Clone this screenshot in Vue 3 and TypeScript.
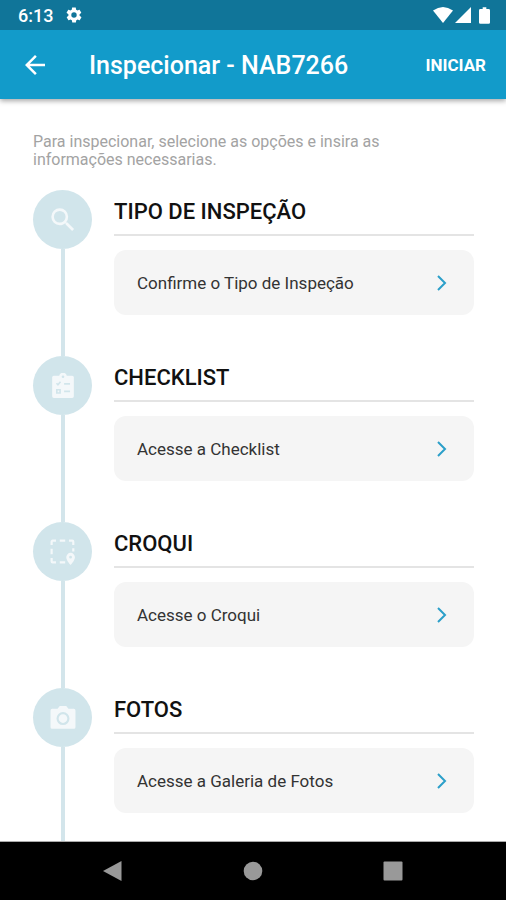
<script setup lang="ts">
type IconName = 'search' | 'checklist' | 'sketch' | 'camera'

interface Step {
  title: string
  action: string
  icon: IconName
}

const steps: Step[] = [
  { title: 'TIPO DE INSPEÇÃO', action: 'Confirme o Tipo de Inspeção', icon: 'search' },
  { title: 'CHECKLIST', action: 'Acesse a Checklist', icon: 'checklist' },
  { title: 'CROQUI', action: 'Acesse o Croqui', icon: 'sketch' },
  { title: 'FOTOS', action: 'Acesse a Galeria de Fotos', icon: 'camera' },
]
</script>

<template>
  <div class="screen">
    <div class="status">
      <span class="time">6:13</span>
      <svg class="gear" viewBox="0 0 24 24" aria-hidden="true">
        <path d="M19.4 13c0-.3.1-.6.1-1s0-.7-.1-1l2.1-1.600c.2-.2.2-.4.1-.6l-2-3.500c-.1-.2-.4-.3-.6-.2l-2.500 1c-.5-.4-1.100-.7-1.700-1l-.4-2.600c0-.2-.2-.4-.5-.4h-4c-.2 0-.5.2-.5.4l-.4 2.600c-.6.3-1.200.6-1.700 1l-2.500-1c-.2-.1-.5 0-.6.2l-2 3.500c-.1.2-.1.5.1.6L4.600 11c-.1.300-.1.700-.1 1s0 .7.1 1l-2.100 1.600c-.2.200-.2.400-.1.600l2 3.500c.1.200.4.300.6.200l2.500-1c.5.400 1.100.7 1.700 1l.4 2.600c0 .2.300.4.500.4h4c.3 0 .5-.2.5-.4l.4-2.600c.6-.3 1.200-.6 1.700-1l2.500 1c.2.100.5 0 .6-.2l2-3.500c.1-.2.1-.4-.1-.6L19.400 13zM12 15.600a3.600 3.600 0 1 1 0-7.200 3.600 3.600 0 0 1 0 7.200z" fill-rule="evenodd" />
      </svg>
      <div class="signals">
        <svg class="wifi" viewBox="0 0 20 16" aria-hidden="true"><path d="M0 3.500Q10-3.500 20 3.500L10 16z" /></svg>
        <svg class="cell" viewBox="0 0 16 16" aria-hidden="true"><path d="M16 0v16H0z" /></svg>
        <svg class="battery" viewBox="0 0 12 18" aria-hidden="true"><path d="M4 0h4v2h2.500Q12 2 12 3.500v13q0 1.500-1.500 1.500h-9Q0 18 0 16.500v-13Q0 2 1.500 2H4z" /></svg>
      </div>
    </div>

    <header class="appbar">
      <button class="back" type="button" aria-label="Voltar">
        <svg viewBox="0 0 24 24" aria-hidden="true"><path d="M20 11H7.830l5.590-5.590L12 4l-8 8 8 8 1.410-1.410L7.830 13H20z" /></svg>
      </button>
      <h1>Inspecionar - NAB7266</h1>
      <button class="start" type="button">INICIAR</button>
    </header>

    <main class="content">
      <p class="intro">Para inspecionar, selecione as opções e insira as informações necessarias.</p>
      <ol class="steps">
        <li v-for="step in steps" :key="step.title" class="step">
          <div class="rail">
            <span class="bubble">
              <svg v-if="step.icon === 'search'" viewBox="2 2 20 20" aria-hidden="true">
                <path d="M15.500 14h-.79l-.28-.27A6.470 6.470 0 0 0 16 9.500 6.500 6.500 0 1 0 9.500 16c1.610 0 3.090-.59 4.230-1.570l.27.28v.79l5 4.990L20.490 19zm-6 0a4.500 4.500 0 1 1 0-9 4.500 4.500 0 0 1 0 9z" />
              </svg>
              <svg v-else-if="step.icon === 'checklist'" viewBox="0 0 24 24" aria-hidden="true">
                <path d="M20.500 2.500h-5a3.600 3.600 0 0 0-7 0h-5A1.500 1.500 0 0 0 2 4v17.500A1.500 1.500 0 0 0 3.500 23h17a1.500 1.500 0 0 0 1.500-1.500V4a1.500 1.500 0 0 0-1.500-1.500z" />
                <g class="cut">
                  <circle cx="12" cy="3.400" r="1.200" class="dot" />
                  <path d="M6 9.500l1.300 1.300 2.400-2.800M13 10h5.500M13 17h5.500M6.300 15.500h3v3h-3z" />
                </g>
              </svg>
              <svg v-else-if="step.icon === 'sketch'" viewBox="0 0 24 24" aria-hidden="true">
                <path class="dash" d="M1.500 5.500v-3a1 1 0 0 1 1-1h3M9 1.500h5M17.500 1.500h3a1 1 0 0 1 1 1v3M21.500 8.500v3M1.500 9v5M1.500 17.500v3a1 1 0 0 0 1 1h3M9 21.500h5" />
                <path d="M19 12.800a4 4 0 0 0-4 4c0 3 4 7.200 4 7.200s4-4.200 4-7.200a4 4 0 0 0-4-4zm0 5.300a1.300 1.300 0 1 1 0-2.600 1.300 1.300 0 0 1 0 2.600z" />
              </svg>
              <svg v-else viewBox="0 0 24 24" aria-hidden="true">
                <path d="M9 1 7 3.500H2A1.500 1.500 0 0 0 .5 5v15.500A1.500 1.500 0 0 0 2 22h20a1.500 1.500 0 0 0 1.500-1.500V5A1.500 1.500 0 0 0 22 3.500h-5L15 1z" />
                <circle cx="12" cy="12.500" r="5" class="lens" />
              </svg>
            </span>
          </div>
          <section class="body">
            <h2>{{ step.title }}</h2>
            <button class="card" type="button">
              <span>{{ step.action }}</span>
              <svg viewBox="0 0 12 18" aria-hidden="true"><path d="M2 2l7 7-7 7" /></svg>
            </button>
          </section>
        </li>
      </ol>
    </main>

    <nav class="system" aria-label="Sistema">
      <button type="button" aria-label="Voltar"><svg viewBox="0 0 20 20" aria-hidden="true"><path d="M18.500 0v20L0 10z" /></svg></button>
      <button type="button" aria-label="Início"><svg viewBox="0 0 20 20" aria-hidden="true"><circle cx="10" cy="10" r="9.300" /></svg></button>
      <button type="button" aria-label="Recentes"><svg viewBox="0 0 20 20" aria-hidden="true"><rect x=".5" y=".5" width="19" height="19" rx="1" /></svg></button>
    </nav>
  </div>
</template>

<style>
body {
  margin: 0;
  background: #fff;
}
</style>

<style scoped>
.screen {
  display: flex;
  flex-direction: column;
  height: 100vh;
  overflow: hidden;
  font-family: Roboto, "Noto Sans", sans-serif;
  color: #111;
}

button {
  margin: 0;
  padding: 0;
  border: 0;
  background: none;
  font: inherit;
  color: inherit;
  cursor: pointer;
}

svg {
  display: block;
  fill: currentColor;
}

.status {
  display: flex;
  flex: none;
  align-items: center;
  z-index: 2;
  box-sizing: border-box;
  height: 30px;
  padding: 0 16px 0 18px;
  background: #107599;
  color: #fff;
}

.time {
  padding-top: 2px;
  font-size: 18px;
  font-weight: 500;
  line-height: 28px;
}

.gear {
  width: 18px;
  height: 18px;
  margin-left: 12px;
}

.signals {
  display: flex;
  align-items: center;
  margin-left: auto;
}

.wifi {
  width: 20px;
  height: 16px;
}

.cell {
  width: 16px;
  height: 16px;
  margin-left: 2px;
}

.battery {
  width: 11px;
  height: 17px;
  margin-left: 8px;
}

.appbar {
  z-index: 1;
  display: flex;
  flex: none;
  align-items: center;
  box-sizing: border-box;
  height: 69px;
  padding: 0 20px;
  background: #129bca;
  color: #fff;
  box-shadow: 0 2px 5px rgba(0, 0, 0, 0.35);
}

.back svg {
  width: 30px;
  height: 30px;
}

h1 {
  flex: 1;
  margin: 0 0 0 39px;
  padding-top: 2px;
  font-size: 25px;
  font-weight: 500;
  line-height: 30px;
}

.start {
  font-size: 17px;
  font-weight: 700;
  line-height: 24px;
}

.content {
  flex: 1;
  min-height: 0;
  overflow: hidden;
  padding: 34px 32px 0 33px;
}

.intro {
  max-width: 380px;
  margin: 0 0 21px;
  font-size: 16px;
  line-height: 18px;
  color: #a3a3a3;
}

.steps {
  margin: 0;
  padding: 0;
  list-style: none;
}

.step {
  display: flex;
  gap: 22px;
}

.rail {
  display: flex;
  flex: none;
  flex-direction: column;
  align-items: center;
  width: 59px;
}

.rail::after {
  content: "";
  flex: 1;
  width: 4px;
  background: #d3e5eb;
}

.bubble {
  display: flex;
  align-items: center;
  justify-content: center;
  width: 59px;
  height: 59px;
  border-radius: 50%;
  background: #d1e5eb;
  color: #f4f8fa;
}

.bubble svg {
  width: 26px;
  height: 26px;
}

.cut {
  fill: none;
  stroke: #d1e5eb;
  stroke-width: 1.5;
}

.dot {
  fill: #d1e5eb;
  stroke: none;
}

.dash {
  fill: none;
  stroke: currentColor;
  stroke-width: 2;
}

.lens {
  fill: none;
  stroke: #d1e5eb;
  stroke-width: 2;
}

.body {
  flex: 1;
  min-width: 0;
  padding-bottom: 41px;
}

h2 {
  margin: 0 0 14px;
  padding: 9px 0;
  border-bottom: 2px solid #e4e4e4;
  font-size: 22px;
  font-weight: 500;
  line-height: 26px;
}

.card {
  display: flex;
  align-items: center;
  justify-content: space-between;
  box-sizing: border-box;
  width: 100%;
  height: 65px;
  padding: 0 26px 0 23px;
  border-radius: 12px;
  background: #f5f5f5;
  font-size: 17px;
  line-height: 24px;
  color: #333;
  text-align: left;
}

.card svg {
  width: 12px;
  height: 18px;
  fill: none;
  stroke: #2b9fc9;
  stroke-width: 2;
}

.system {
  display: flex;
  flex: none;
  align-items: center;
  justify-content: center;
  gap: 120px;
  box-sizing: border-box;
  height: 59px;
  border-top: 1px solid #aaa;
  background: #000;
  color: #999;
}

.system svg {
  width: 20px;
  height: 20px;
}
</style>
